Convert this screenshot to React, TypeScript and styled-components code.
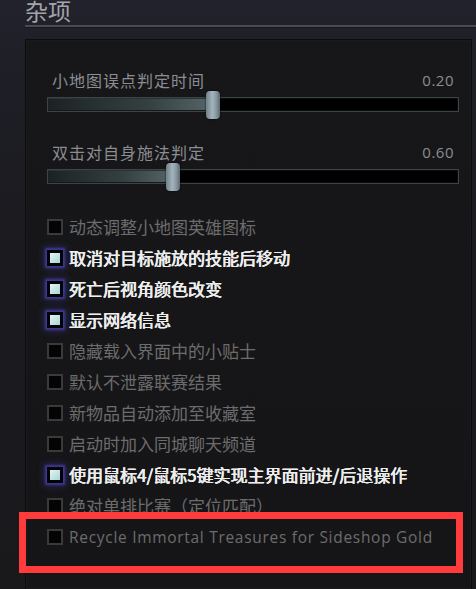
import React from 'react'
import styled, { createGlobalStyle, css } from 'styled-components';

const GlobalStyle = createGlobalStyle`
    html, body {
        margin: 0;
        padding: 0;
        background: #1a1a1e;
    }
    body {
        font-family: "Noto Sans CJK SC", "Noto Sans", sans-serif;
    }
`;

const Screen = styled.div`
    position: relative;
    width: 476px;
    height: 589px;
    overflow: hidden;
    box-sizing: border-box;
    padding: 0 4px 0 25px;
    display: flex;
    flex-direction: column;
    background: linear-gradient(to bottom, #23232e 0px, #1f1f28 45px, #1b1b20 220px, #19191c 100%);
`;

const Title = styled.h2`
    margin: -2px 0 0;
    font-size: 23px;
    line-height: 24px;
    font-weight: normal;
    color: #a3a5a9;
`;

const Divider = styled.div`
    margin-top: 3px;
    height: 2px;
    margin-right: -4px;
    background: #4b4b51;
    border-bottom: 1px solid #17171b;
`;

const Panel = styled.div`
    flex: 1;
    margin-top: 11px;
    border: 1px solid #0c0c0e;
    border-bottom: none;
    background: linear-gradient(to bottom, #17171a, #151517);
    box-shadow: inset 0 0 0 1px #1a1a1d;
    padding: 30px 12px 0 21px;
`;

const SliderBlock = styled.div`
    & + & {
        margin-top: 30px;
    }
`;

const SliderHead = styled.div`
    display: flex;
    justify-content: space-between;
    align-items: center;
    height: 20px;
    padding: 0 5px;
    font-size: 16px;
    letter-spacing: 1px;
    color: #8b8d90;
`;

const SliderValue = styled.span`
    font-family: "Open Sans", "Noto Sans", sans-serif;
    font-size: 15px;
    letter-spacing: 0.5px;
`;

const Track = styled.div`
    position: relative;
    margin-top: 7px;
    height: 15px;
    box-sizing: border-box;
    border: 1px solid #3d4446;
    background: #000;
    box-shadow: inset 0 0 0 1px #0a0c0c;
`;

const Fill = styled.div`
    height: 100%;
    background: linear-gradient(to right, #1c2224 0%, #34403f 60%, #56656a 100%);
    box-shadow: inset 0 1px 0 #2a3234, inset 0 -1px 0 #141818;
`;

const Thumb = styled.div`
    position: absolute;
    top: 50%;
    width: 14px;
    height: 28px;
    margin: -14px 0 0 -7px;
    border-radius: 4px;
    background: linear-gradient(to right, #6f8089 0%, #a3b4bd 45%, #8c9ca6 70%, #5c6a72 100%);
    box-shadow: 0 0 2px rgba(0, 0, 0, 0.9);
`;

const CheckList = styled.div`
    margin-top: 27px;
    display: flex;
    flex-direction: column;
`;

const Row = styled.div`
    display: flex;
    align-items: center;
    height: 31px;
    gap: 6px;
`;

const Box = styled.span<{ $on: boolean }>`
    flex: none;
    width: 16px;
    height: 16px;
    box-sizing: border-box;
    ${p => p.$on ? css`
        border: 3px solid #020204;
        background: linear-gradient(135deg, #e2f6f6, #a9d4d6);
        box-shadow: 0 0 2px 2px rgba(70, 70, 180, 0.7), 0 0 7px 3px rgba(70, 60, 160, 0.45);
    ` : css`
        border: 2px solid #3a3a3a;
        background: #040404;
    `}
`;

const Label = styled.span<{ $on: boolean; $latin?: boolean }>`
    font-size: 17px;
    line-height: 20px;
    white-space: nowrap;
    color: ${p => p.$on ? '#eeeeee' : '#6c6c6c'};
    ${p => p.$on && css`
        text-shadow: 0.4px 0 0 #eeeeee, -0.2px 0 0 #eeeeee;
    `}
    ${p => p.$latin && css`
        font-family: "Open Sans", "Noto Sans", sans-serif;
        font-size: 15.5px;
        letter-spacing: 0.7px;
    `}
`;

const Highlight = styled.div`
    position: absolute;
    left: 19px;
    top: 512px;
    width: 444px;
    height: 61px;
    box-sizing: border-box;
    border: 7px solid #ff3b3b;
    pointer-events: none;
`;

const sliders = [
    { label: '小地图误点判定时间', value: '0.20', pos: 0.403 },
    { label: '双击对自身施法判定', value: '0.60', pos: 0.306 },
];

const options: { label: string; on: boolean; latin?: boolean }[] = [
    { label: '动态调整小地图英雄图标', on: false },
    { label: '取消对目标施放的技能后移动', on: true },
    { label: '死亡后视角颜色改变', on: true },
    { label: '显示网络信息', on: true },
    { label: '隐藏载入界面中的小贴士', on: false },
    { label: '默认不泄露联赛结果', on: false },
    { label: '新物品自动添加至收藏室', on: false },
    { label: '启动时加入同城聊天频道', on: false },
    { label: '使用鼠标4/鼠标5键实现主界面前进/后退操作', on: true },
    { label: '绝对单排比赛（定位匹配）', on: false },
    { label: 'Recycle Immortal Treasures for Sideshop Gold', on: false, latin: true },
];

function App() {
    return (
        <>
            <GlobalStyle />
            <Screen>
                <Title>杂项</Title>
                <Divider />
                <Panel>
                    {sliders.map(s => (
                        <SliderBlock key={s.label}>
                            <SliderHead>
                                <span>{s.label}</span>
                                <SliderValue>{s.value}</SliderValue>
                            </SliderHead>
                            <Track>
                                <Fill style={{ width: `${s.pos * 100}%` }} />
                                <Thumb style={{ left: `${s.pos * 100}%` }} />
                            </Track>
                        </SliderBlock>
                    ))}
                    <CheckList>
                        {options.map(o => (
                            <Row key={o.label}>
                                <Box $on={o.on} />
                                <Label $on={o.on} $latin={o.latin}>{o.label}</Label>
                            </Row>
                        ))}
                    </CheckList>
                </Panel>
                <Highlight />
            </Screen>
        </>
    )
}

export default App;
